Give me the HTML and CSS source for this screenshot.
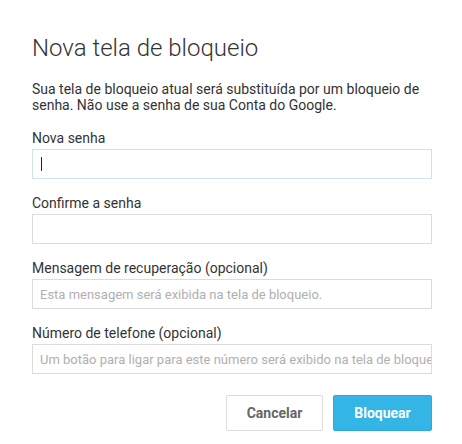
FILE: index.html
```html
<!DOCTYPE html>
<html lang="pt-BR">
<head>
<meta charset="utf-8">
<title>Nova tela de bloqueio</title>
<link rel="stylesheet" href="styles.css">
</head>
<body>
<div class="dialog">
  <h1 class="title">Nova tela de bloqueio</h1>
  <p class="intro">Sua tela de bloqueio atual será substituída por um bloqueio de senha. Não use a senha de sua Conta do Google.</p>
  <div class="fields">
    <div class="field">
      <label class="label">Nova senha</label>
      <div class="input focused"><span class="caret"></span></div>
    </div>
    <div class="field">
      <label class="label">Confirme a senha</label>
      <div class="input"></div>
    </div>
    <div class="field">
      <label class="label">Mensagem de recuperação (opcional)</label>
      <div class="input"><span class="placeholder">Esta mensagem será exibida na tela de bloqueio.</span></div>
    </div>
    <div class="field">
      <label class="label">Número de telefone (opcional)</label>
      <div class="input"><span class="placeholder">Um botão para ligar para este número será exibido na tela de bloqueio.</span></div>
    </div>
  </div>
  <div class="actions">
    <button class="btn btn-cancel">Cancelar</button>
    <button class="btn btn-primary">Bloquear</button>
  </div>
</div>
</body>
</html>
```
FILE: styles.css
```css
html, body {
  margin: 0;
  padding: 0;
  background: #fff;
}
body {
  font-family: Roboto, "Liberation Sans", Arial, sans-serif;
  color: #333;
}
.dialog {
  width: 400px;
  padding: 32px 30px 0 32px;
}
.title {
  margin: 0;
  font-size: 24px;
  font-weight: 300;
  line-height: 32px;
  color: #333;
}
.intro {
  margin: 17px 0 17px;
  font-size: 14px;
  line-height: 16px;
  color: #333;
}
.fields {
  display: flex;
  flex-direction: column;
  gap: 16px;
}
.field {
  display: flex;
  flex-direction: column;
  gap: 2px;
}
.label {
  font-size: 14px;
  line-height: 17px;
  color: #333;
}
.input {
  box-sizing: border-box;
  height: 30px;
  border: 1px solid #dcdcdc;
  padding: 0 0 0 7px;
  display: flex;
  align-items: center;
  overflow: hidden;
  white-space: nowrap;
  background: #fff;
}
.input.focused {
  border-color: #cfe3ea;
}
.caret {
  width: 1px;
  height: 14px;
  background: #222;
  margin-left: 1px;
}
.placeholder {
  font-size: 13px;
  color: #b0b0b0;
}
.actions {
  display: flex;
  justify-content: flex-end;
  gap: 10px;
  margin-top: 21px;
}
.btn {
  box-sizing: border-box;
  height: 36px;
  font-family: Roboto, "Liberation Sans", Arial, sans-serif;
  font-size: 14px;
  font-weight: 700;
  border-radius: 2px;
  cursor: pointer;
}
.btn-cancel {
  width: 97px;
  background: #fff;
  border: 1px solid #dcdcdc;
  color: #666;
}
.btn-primary {
  width: 99px;
  background: #33b5e5;
  border: 1px solid #2ea8d6;
  color: #fff;
}
```
